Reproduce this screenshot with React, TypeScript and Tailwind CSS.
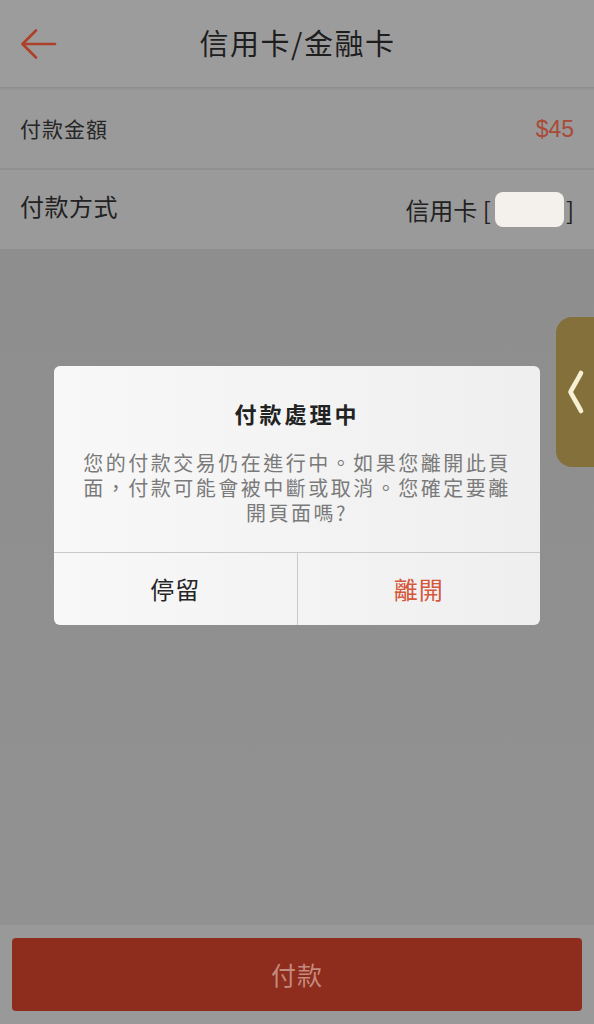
import React from 'react';

const font = { fontFamily: '"Noto Sans CJK TC", "Noto Sans", sans-serif' };

/* ── Back arrow ─────────────────────────────── */
function BackArrow() {
  return (
    <svg width="40" height="34" viewBox="0 0 40 34" fill="none">
      <path d="M37 17H5" stroke="#ad4029" strokeWidth="2.6" strokeLinecap="round" />
      <path d="M18 3.5L4.5 17L18 30.5" stroke="#ad4029" strokeWidth="2.6" strokeLinecap="round" strokeLinejoin="round" />
    </svg>
  );
}

/* ── Floating side tab ──────────────────────── */
function SideTab() {
  return (
    <div className="absolute right-0 top-[317px] w-[38px] h-[150px] rounded-l-[16px] bg-[#84703b] flex items-center pl-[10px]">
      <svg width="20" height="46" viewBox="0 0 20 46" fill="none">
        <path d="M15 4C11.5 11 7.5 17 4.5 23C7.5 29 11.5 35 15 42" stroke="#f6f0d4" strokeWidth="4.6" strokeLinecap="round" strokeLinejoin="round" />
      </svg>
    </div>
  );
}

/* ── Leave confirmation dialog ──────────────── */
function LeaveDialog() {
  return (
    <div className="absolute left-[54px] top-[366px] w-[486px] rounded-[6px] bg-gradient-to-r from-[#f8f8f8] to-[#efefef] overflow-hidden">
      <div className="pt-[32px] px-[26px] pb-[27px] flex flex-col items-center">
        <div className="text-[22px] leading-[30px] font-bold text-[#222] tracking-[3px]">付款處理中</div>
        <div className="mt-[22px] w-[432px] text-center text-[20px] leading-[25px] text-[#7a7a7a] tracking-[2.5px]">
          您的付款交易仍在進行中。如果您離開此頁面，付款可能會被中斷或取消。您確定要離開頁面嗎?
        </div>
      </div>
      <div className="flex border-t border-[#c9c9c9] h-[73px]">
        <button className="flex-1 flex items-center justify-center text-[24px] text-[#262626] tracking-[1px] border-r border-[#c9c9c9]">
          停留
        </button>
        <button className="flex-1 flex items-center justify-center text-[24px] text-[#d5573c] tracking-[1px]">
          離開
        </button>
      </div>
    </div>
  );
}

export default function App() {
  return (
    <div style={font} className="relative w-full h-[1024px] overflow-hidden flex flex-col bg-[#8f8f8f]">
      {/* Header */}
      <div className="h-[88px] shrink-0 bg-[#9c9c9c] relative flex items-center justify-center border-b border-[#8c8c8c]">
        <div className="absolute left-[18px] top-[27px]">
          <BackArrow />
        </div>
        <div className="text-[29px] leading-none text-[#1e1e1e] tracking-[1.5px] pl-[1px] -mt-[2px]">信用卡/金融卡</div>
      </div>
      <div className="h-[2px] bg-[#959595]" />

      {/* Amount row */}
      <div className="h-[80px] shrink-0 bg-[#9a9a9a] flex items-center justify-between px-[20px] border-b-2 border-[#909090]">
        <span className="text-[21px] text-[#262626] tracking-[1px]">付款金額</span>
        <span className="text-[23px] font-medium text-[#a84a37]" style={{ fontFamily: '"Liberation Sans", sans-serif' }}>$45</span>
      </div>

      {/* Method row */}
      <div className="h-[79px] shrink-0 bg-[#9a9a9a] flex items-center justify-between px-[20px]">
        <span className="text-[24px] text-[#222] tracking-[0.5px] -mt-[8px]">付款方式</span>
        <div className="flex items-center text-[24px] text-[#222]">
          <span>信用卡 [</span>
          <span className="ml-[4px] w-[69px] h-[35px] rounded-[8px] bg-[#f4f1ec]" />
          <span className="ml-[2px]">]</span>
        </div>
      </div>

      <div className="flex-1 bg-gradient-to-b from-[#8e8e8e] to-[#919191]" />

      {/* Pay bar */}
      <div className="h-[99px] shrink-0 bg-[#999999] px-[12px] pt-[13px]">
        <button className="w-full h-[73px] rounded-[4px] bg-[#8e2d1e] text-[25px] text-[#c48a7c] tracking-[1px] flex items-center justify-center">
          付款
        </button>
      </div>

      <LeaveDialog />
      <SideTab />
    </div>
  );
}
